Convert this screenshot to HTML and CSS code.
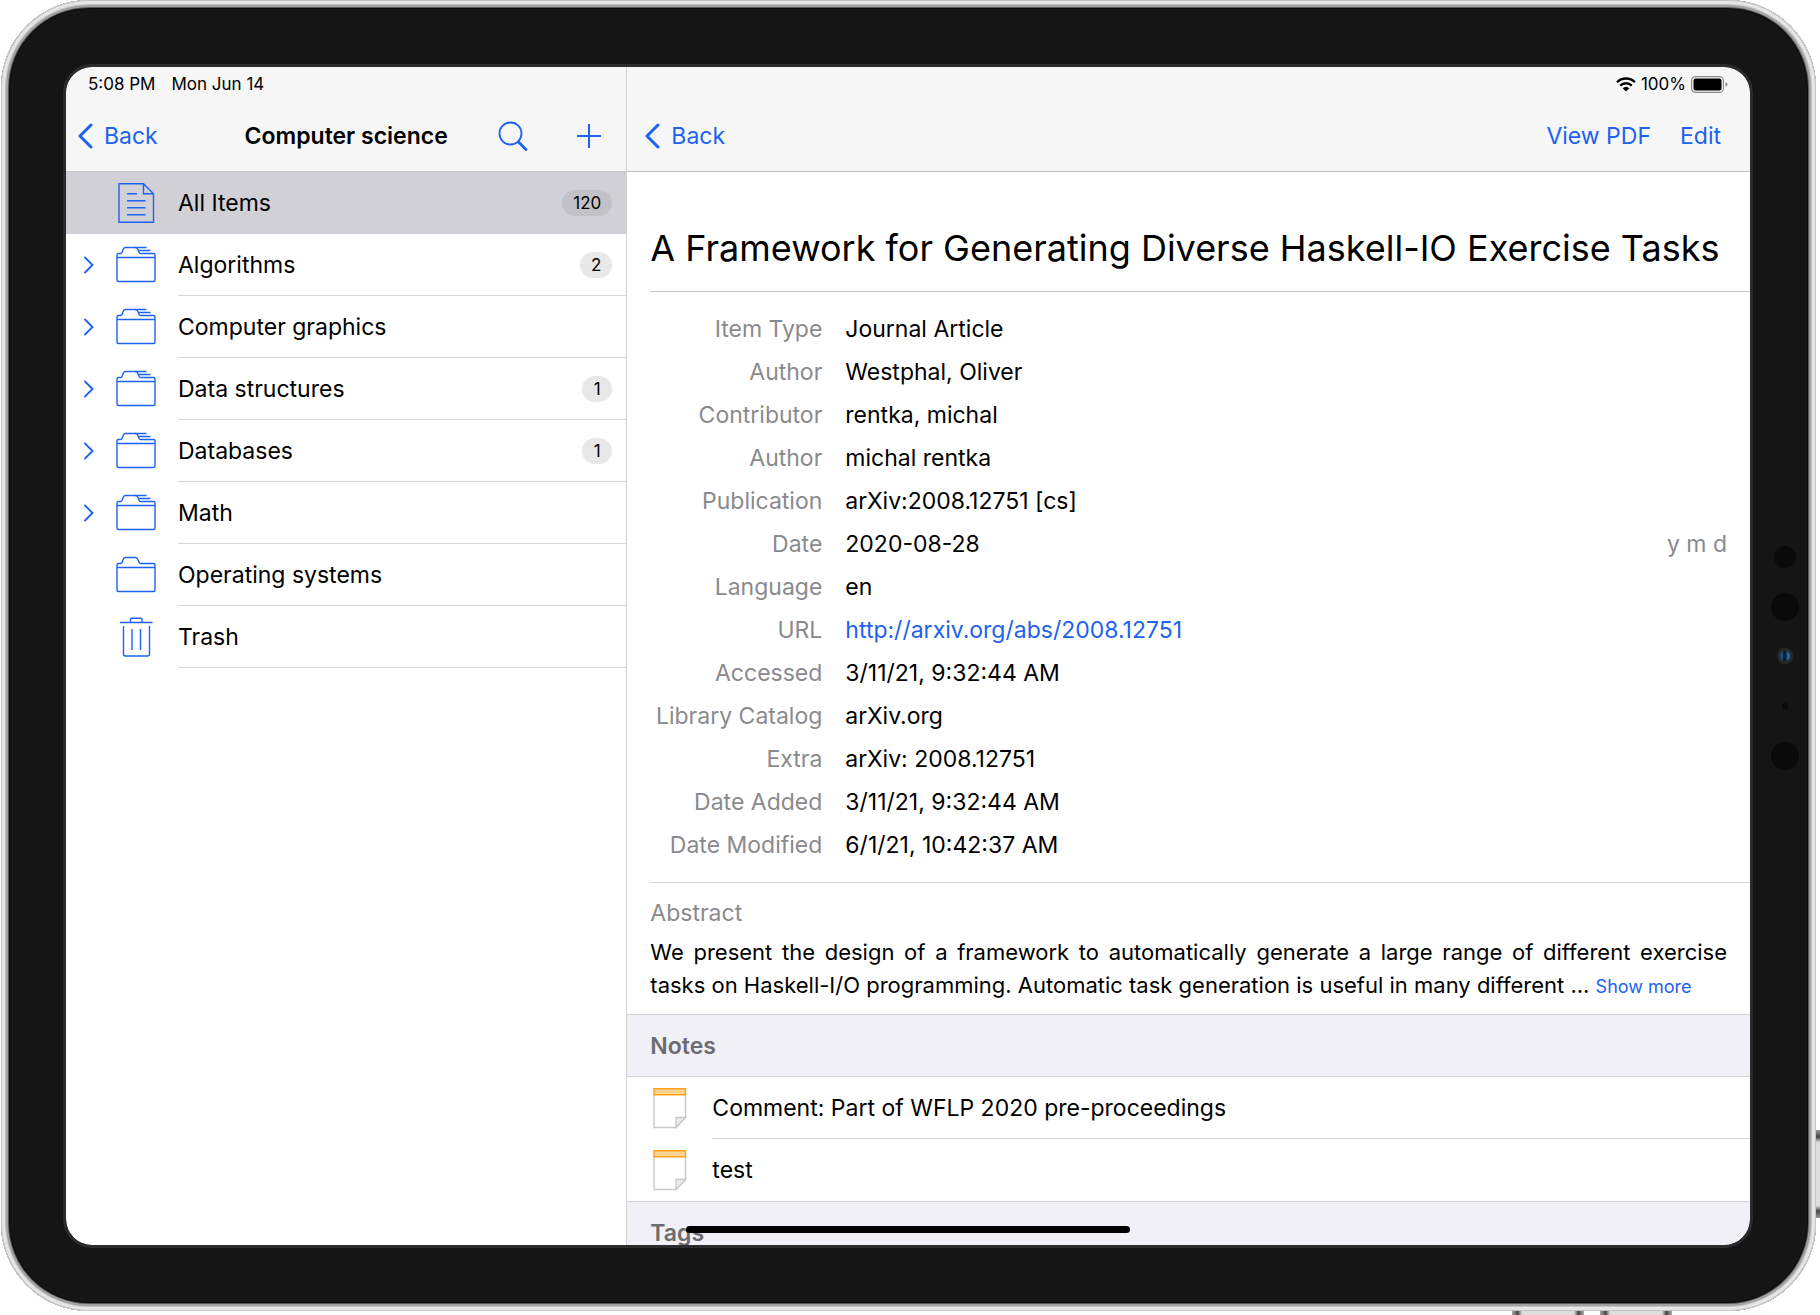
FILE: index.html
```html
<!DOCTYPE html>
<html lang="en">
<head>
<meta charset="utf-8">
<title>Computer science</title>
<link rel="stylesheet" href="styles.css">
</head>
<body>
<svg class="sprite" aria-hidden="true">
  <symbol id="back" viewBox="0 0 16 26"><path d="M14 2 3 13l11 11" fill="none" stroke="currentColor" stroke-width="3" stroke-linecap="round" stroke-linejoin="round"/></symbol>
  <symbol id="chevron" viewBox="0 0 10 18"><path d="M1 1.500 8.500 9 1 16.500" fill="none" stroke="currentColor" stroke-width="1.800" stroke-linecap="round" stroke-linejoin="round"/></symbol>
  <symbol id="folder" viewBox="0 0 40 37"><path d="M1 11.500h38M2.500 35.500h35a1.500 1.500 0 0 0 1.500-1.500V9a1.500 1.500 0 0 0-1.500-1.500H24.500q-1 0-1.400-1L21.500 2.800q-.5-1.300-1.800-1.300H9.300Q8 1.500 7.500 2.700L6 6.500q-.4 1-1.400 1H2.500A1.500 1.500 0 0 0 1 9v25a1.500 1.500 0 0 0 1.500 1.500z" fill="none" stroke="currentColor" stroke-width="1.400"/></symbol>
  <symbol id="folders" viewBox="0 0 40 37"><use href="#folder"/><path d="M19 1.500h11.500M22.500 4.500h12" fill="none" stroke="currentColor" stroke-width="1.400"/></symbol>
  <symbol id="document" viewBox="0 0 40 40"><path d="M3 .7h24.500l10 10V39.300H3zM27.500.7v10h10M11 10.700h10M11 17.800h18.500M11 24.800h18.500M11 31.800h18.500" fill="none" stroke="currentColor" stroke-width="1.400"/></symbol>
  <symbol id="trash" viewBox="0 0 40 40"><path d="M4 5.500h32.500M14.500 5.500V2.200q0-1 1-1h9.500q1 0 1 1v3.300M7.500 9v28q0 2 2 2h22q2 0 2-2V9M16 12v21M24.500 12v21" fill="none" stroke="currentColor" stroke-width="1.400"/></symbol>
  <symbol id="note" viewBox="0 0 34 41"><path d="M1 7v32.500h22l9.500-10V7" fill="#fff" stroke="#c9c9cb" stroke-width="1.400"/><path d="M23 39.500V29.500h9.500z" fill="#ececee" stroke="#c9c9cb" stroke-width="1.400"/><path d="M1 .8h31.500v6H1z" fill="#ffd591" stroke="#ff9f1a" stroke-width="1.400"/></symbol>
</svg>

<div class="device">
  <span class="side-key power"></span>
  <span class="side-key volume-up"></span>
  <span class="side-key volume-down"></span>
  <div class="sensors">
    <span class="sensor small"></span>
    <span class="sensor large"></span>
    <span class="camera"></span>
    <span class="sensor dot"></span>
    <span class="sensor large last"></span>
  </div>

  <div class="screen">
    <nav class="sidebar">
      <header class="bar">
        <div class="status"><span>5:08 PM</span><span>Mon Jun 14</span></div>
        <div class="toolbar sidebar-toolbar">
          <button class="back" type="button"><svg width="16" height="26"><use href="#back"/></svg>Back</button>
          <h2 class="bar-title">Computer science</h2>
          <div class="tools">
            <button type="button" aria-label="Search"><svg width="30" height="30" viewBox="0 0 30 30"><circle cx="12.500" cy="12.500" r="11" fill="none" stroke="currentColor" stroke-width="1.800"/><path d="m20.500 21 7.500 7.500" fill="none" stroke="currentColor" stroke-width="2.800" stroke-linecap="round"/></svg></button>
            <button type="button" aria-label="Add"><svg width="26" height="26" viewBox="0 0 26 26"><path d="M13 1v24M1 13h24" stroke="currentColor" stroke-width="2"/></svg></button>
          </div>
        </div>
      </header>
      <ul class="collections">
        <li class="collection selected"><span class="toggle"></span><a href="#all"><svg class="icon" width="40" height="40"><use href="#document"/></svg><span class="name">All Items<span class="count">120</span></span></a></li>
        <li class="collection"><button class="toggle" type="button" aria-label="Expand Algorithms"><svg width="10" height="18"><use href="#chevron"/></svg></button><a href="#algorithms"><svg class="icon" width="40" height="37"><use href="#folders"/></svg><span class="name">Algorithms<span class="count">2</span></span></a></li>
        <li class="collection"><button class="toggle" type="button" aria-label="Expand Computer graphics"><svg width="10" height="18"><use href="#chevron"/></svg></button><a href="#graphics"><svg class="icon" width="40" height="37"><use href="#folders"/></svg><span class="name">Computer graphics</span></a></li>
        <li class="collection"><button class="toggle" type="button" aria-label="Expand Data structures"><svg width="10" height="18"><use href="#chevron"/></svg></button><a href="#structures"><svg class="icon" width="40" height="37"><use href="#folders"/></svg><span class="name">Data structures<span class="count">1</span></span></a></li>
        <li class="collection"><button class="toggle" type="button" aria-label="Expand Databases"><svg width="10" height="18"><use href="#chevron"/></svg></button><a href="#databases"><svg class="icon" width="40" height="37"><use href="#folders"/></svg><span class="name">Databases<span class="count">1</span></span></a></li>
        <li class="collection"><button class="toggle" type="button" aria-label="Expand Math"><svg width="10" height="18"><use href="#chevron"/></svg></button><a href="#math"><svg class="icon" width="40" height="37"><use href="#folders"/></svg><span class="name">Math</span></a></li>
        <li class="collection"><span class="toggle"></span><a href="#systems"><svg class="icon" width="40" height="37"><use href="#folder"/></svg><span class="name">Operating systems</span></a></li>
        <li class="collection"><span class="toggle"></span><a href="#trash-items"><svg class="icon" width="40" height="40"><use href="#trash"/></svg><span class="name">Trash</span></a></li>
      </ul>
    </nav>

    <main class="detail">
      <header class="bar">
        <div class="status status-end">
          <svg width="20" height="15" viewBox="0 0 20 15"><path d="M1 5.200a12.800 12.800 0 0 1 18 0M4.200 8.600a8.300 8.300 0 0 1 11.600 0" fill="none" stroke="#000" stroke-width="2.300"/><path d="M6.700 11.200a4.800 4.800 0 0 1 6.600 0L10 14.600z"/></svg>
          <span>100%</span>
          <svg width="37" height="17" viewBox="0 0 37 17"><rect x=".6" y=".6" width="31.800" height="15.800" rx="4" fill="none" stroke="#8c8c8c" stroke-width="1.200"/><rect x="2.500" y="2.500" width="28" height="12" rx="2"/><path d="M34.500 6q2 .8 2 2.500t-2 2.500z" fill="#8c8c8c"/></svg>
        </div>
        <div class="toolbar detail-toolbar">
          <button class="back" type="button"><svg width="16" height="26"><use href="#back"/></svg>Back</button>
          <div class="actions"><button type="button">View PDF</button><button type="button">Edit</button></div>
        </div>
      </header>

      <h1 class="title">A Framework for Generating Diverse Haskell-IO Exercise Tasks</h1>

      <dl class="fields">
        <div class="field"><dt>Item Type</dt><dd>Journal Article</dd></div>
        <div class="field"><dt>Author</dt><dd>Westphal, Oliver</dd></div>
        <div class="field"><dt>Contributor</dt><dd>rentka, michal</dd></div>
        <div class="field"><dt>Author</dt><dd>michal rentka</dd></div>
        <div class="field"><dt>Publication</dt><dd>arXiv:2008.12751 [cs]</dd></div>
        <div class="field"><dt>Date</dt><dd>2020-08-28<span class="order">y m d</span></dd></div>
        <div class="field"><dt>Language</dt><dd>en</dd></div>
        <div class="field"><dt>URL</dt><dd><a href="http://arxiv.org/abs/2008.12751">http://arxiv.org/abs/2008.12751</a></dd></div>
        <div class="field"><dt>Accessed</dt><dd>3/11/21, 9:32:44 AM</dd></div>
        <div class="field"><dt>Library Catalog</dt><dd>arXiv.org</dd></div>
        <div class="field"><dt>Extra</dt><dd>arXiv: 2008.12751</dd></div>
        <div class="field"><dt>Date Added</dt><dd>3/11/21, 9:32:44 AM</dd></div>
        <div class="field"><dt>Date Modified</dt><dd>6/1/21, 10:42:37 AM</dd></div>
      </dl>

      <section class="abstract">
        <h3>Abstract</h3>
        <p>We present the design of a framework to automatically generate a large range of different exercise tasks on Haskell-I/O programming. Automatic task generation is useful in many different ... <a href="#abstract">Show more</a></p>
      </section>

      <section>
        <h3 class="section-title">Notes</h3>
        <ul class="notes">
          <li><svg width="34" height="41"><use href="#note"/></svg><span>Comment: Part of WFLP 2020 pre-proceedings</span></li>
          <li><svg width="34" height="41"><use href="#note"/></svg><span>test</span></li>
        </ul>
      </section>
      <section>
        <h3 class="section-title">Tags</h3>
      </section>
    </main>
    <span class="home-indicator"></span>
  </div>
</div>
</body>
</html>
```
FILE: styles.css
```css
* { box-sizing: border-box; }

body {
  margin: 0;
  height: 100vh;
  padding: 0 4px 4px 1px;
  overflow: hidden;
  background: #fff;
  color: #000;
  font: 400 23px/28px Inter, "Liberation Sans", sans-serif;
}

h1, h2, h3, p, ul, dl, dd { margin: 0; padding: 0; font-weight: 400; }
h2, h3 { font-size: inherit; }
ul { list-style: none; }
a { color: inherit; text-decoration: none; }
svg { display: block; flex: none; }
button {
  padding: 0;
  border: 0;
  background: none;
  color: #1d62f0;
  font: inherit;
  cursor: pointer;
}
.sprite { position: absolute; width: 0; height: 0; }

/* Tablet body */
.device {
  position: relative;
  height: 100%;
  padding: 67px 66px 66px 65px;
  border-radius: 88px;
  background: #151515;
  box-shadow:
    inset 0 0 0 1px #c4c4c4,
    inset 0 0 0 4px #e6e6e6,
    inset 0 0 0 5px #c4c3c4,
    inset 0 0 0 7px #a3a2a3,
    inset 0 0 0 8px #5a5a5a,
    inset 0 0 0 9px #0a0a0a;
}
.side-key {
  position: absolute;
  background: linear-gradient(90deg, #aaa, #444 8%, #ddd 14%, #ddd 86%, #444 92%, #aaa);
}
.power {
  top: 1130px;
  left: 100%;
  width: 4px;
  height: 88px;
  background: linear-gradient(#999, #444 8%, #ddd 14%, #ddd 86%, #444 92%, #999);
}
.volume-up, .volume-down { top: 100%; width: 72px; height: 4px; }
.volume-up { right: 232px; }
.volume-down { right: 144px; }

.sensors {
  position: absolute;
  top: 4px;
  bottom: 0;
  right: 17px;
  width: 29px;
  display: flex;
  flex-direction: column;
  align-items: center;
  justify-content: center;
}
.sensor { border-radius: 50%; background: #0a0a0a; }
.small { width: 22px; height: 22px; }
.large { width: 28px; height: 28px; margin-top: 25px; }
.dot { width: 6px; height: 6px; margin-top: 39px; }
.last { margin-top: 33px; }
.camera {
  width: 16px;
  height: 16px;
  margin-top: 27px;
  border: 3px solid #26282b;
  border-radius: 50%;
  background: linear-gradient(90deg, #1c4f80 25%, #0b1b38 35%, #0b1b38 60%, #2467a5 75%);
}

.screen {
  position: relative;
  display: flex;
  height: 100%;
  overflow: hidden;
  border-radius: 26px;
  background: #fff;
  outline: 3px solid #2c2c2d;
  box-shadow: 0 0 0 1px #000;
}
.home-indicator {
  position: absolute;
  bottom: 12px;
  left: 50%;
  width: 444px;
  height: 7px;
  margin-left: -222px;
  border-radius: 4px;
  background: #000;
}

/* Bars */
.bar { height: 105px; background: #f6f6f6; border-bottom: 1px solid #c3c3c6; }
.status {
  display: flex;
  align-items: center;
  gap: 16px;
  height: 34px;
  padding: 0 22px;
  font-size: 17px;
  line-height: 20px;
}
.status-end { justify-content: flex-end; gap: 5px; }
.toolbar { height: 70px; align-items: center; }
.sidebar-toolbar {
  display: grid;
  grid-template-columns: 1fr auto 1fr;
}
.back { display: flex; align-items: center; gap: 11px; padding-left: 11px; }
.bar-title { font-weight: 600; }
.tools {
  display: flex;
  align-items: center;
  justify-content: flex-end;
  gap: 48px;
  padding-right: 24px;
}
.detail-toolbar { display: flex; justify-content: space-between; padding: 0 29px 0 6px; }
.actions { display: flex; gap: 29px; }

/* Sidebar */
.sidebar { flex: 0 0 calc(100% / 3); border-right: 1px solid #d4d4d6; }
.collection { display: flex; height: 62px; }
.collection a { flex: 1; display: flex; align-items: center; }
.selected { background: #d1d0d7; }
.toggle { flex: none; display: grid; place-items: center; width: 45px; }
.icon { margin: 0 22px 1px 5px; color: #1d62f0; }
.name {
  flex: 1;
  display: flex;
  align-items: center;
  justify-content: space-between;
  height: 62px;
  padding-right: 14px;
  border-bottom: 1px solid #d6d6d8;
}
.selected .name { border-color: transparent; }
.count {
  min-width: 30px;
  padding: 3px 11px;
  border-radius: 13px;
  background: #e8e8e9;
  font-size: 17px;
  line-height: 20px;
  text-align: center;
}
.selected .count { background: #c2c1c7; }

/* Item detail */
.detail { flex: 1; min-width: 0; }
.title {
  margin-left: 23px;
  padding: 52px 0 19px;
  border-bottom: 1px solid #c6c6c8;
  font-size: 36px;
  line-height: 48px;
  white-space: nowrap;
}
.fields { margin-left: 23px; padding: 15px 0 16px; border-bottom: 1px solid #d6d6d8; }
.field { display: flex; gap: 23px; height: 43px; align-items: center; }
.field dt { flex: none; width: 172px; color: #8a8a8e; text-align: right; white-space: nowrap; }
.field dd { flex: 1; display: flex; justify-content: space-between; padding-right: 23px; }
.field a, .abstract a { color: #1d62f0; }
.order { color: #8a8a8e; }
.abstract { padding: 16px 23px 12px; }
.abstract h3 { margin-bottom: 9px; color: #8a8a8e; }
.abstract p { font-size: 22px; line-height: 33px; text-align: justify; }
.abstract a { font-size: 18px; line-height: 20px; white-space: nowrap; }
.section-title {
  height: 63px;
  padding: 17px 23px;
  border: solid #d2d2d6;
  border-width: 1px 0;
  background: #f1f0f7;
  color: #6b6b70;
  font-weight: 600;
}
.notes li { display: flex; align-items: center; padding-left: 26px; gap: 25px; height: 62px; }
.notes span { flex: 1; height: 62px; line-height: 62px; }
.notes li:not(:last-child) span { border-bottom: 1px solid #d6d6d8; }
```
